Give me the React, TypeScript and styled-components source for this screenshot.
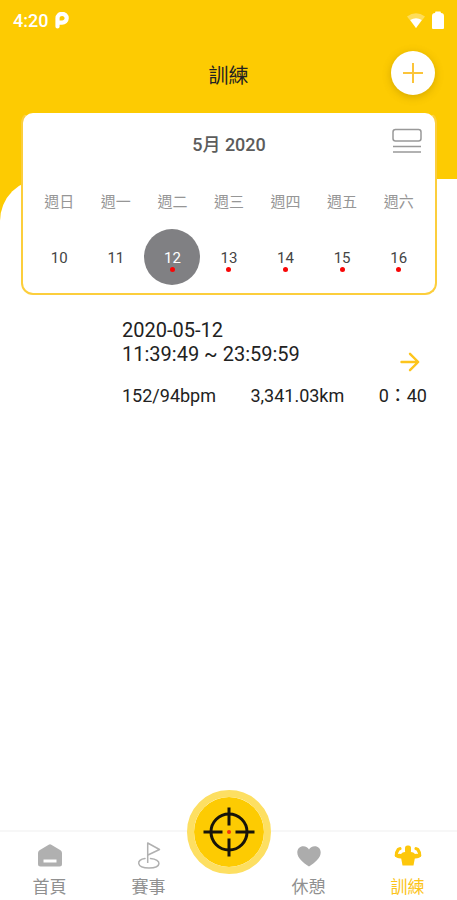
import React from "react";
import styled, { createGlobalStyle } from "styled-components";

const YELLOW = "#fdcb02";
const GREY = "#b0b0b0";

const GlobalStyle = createGlobalStyle`
  *, *::before, *::after { box-sizing: border-box; }
  body {
    margin: 0;
    background: #fff;
    font-family: Roboto, "Noto Sans CJK TC", sans-serif;
    color: #222;
  }
  button { font: inherit; color: inherit; border: 0; padding: 0; background: none; cursor: pointer; }
  a { text-decoration: none; color: inherit; }
  svg { display: block; }
`;

const Page = styled.div`
  min-height: 100vh;
  display: flex;
  flex-direction: column;
  background: ${YELLOW};
`;

const StatusBar = styled.div`
  height: 40px;
  padding: 0 13px;
  display: flex;
  align-items: center;
  justify-content: space-between;
  color: #fff;
  font-size: 18px;
  font-weight: 500;
`;

const StatusGroup = styled.div`
  display: flex;
  align-items: center;
  gap: 7px;
`;

const Header = styled.header`
  height: 139px;
  padding: 11px 22px 0;
  display: grid;
  grid-template-columns: 44px 1fr 44px;
  align-items: start;
`;

const Title = styled.h1`
  grid-column: 2;
  margin: 0;
  text-align: center;
  font-size: 20px;
  line-height: 50px;
  font-weight: 400;
`;

const AddButton = styled.button`
  width: 44px;
  height: 44px;
  border-radius: 50%;
  background: #fff;
  display: grid;
  place-items: center;
  box-shadow: 0 2px 8px rgba(120, 90, 0, 0.3);
`;

const Sheet = styled.main`
  flex: 1;
  display: flex;
  flex-direction: column;
  background: #fff;
  border-top-left-radius: 42px;
`;

const Card = styled.section`
  margin: -68px 20px 0 21px;
  padding: 0 8px 8px;
  background: #fff;
  border: 2px solid #fcce3c;
  border-top-color: ${YELLOW};
  border-radius: 12px;
`;

const MonthRow = styled.div`
  height: 60px;
  padding: 0 5px;
  display: grid;
  grid-template-columns: 30px 1fr 30px;
  align-items: center;
`;

const Month = styled.h2`
  grid-column: 2;
  margin: 0;
  text-align: center;
  font-size: 18px;
  font-weight: 500;
  color: #5c5c5c;
`;

const ToggleButton = styled.button`
  width: 30px;
  height: 26px;
  margin-bottom: 4px;
`;

const Calendar = styled.table`
  width: 100%;
  table-layout: fixed;
  border-collapse: collapse;
`;

const Weekday = styled.th`
  height: 56px;
  padding: 0 0 2px;
  font-size: 15px;
  font-weight: 400;
  color: #969696;
`;

const DayCell = styled.td`
  padding: 0;
`;

const Day = styled.button<{ $selected: boolean }>`
  display: flex;
  flex-direction: column;
  align-items: center;
  width: 56px;
  height: 56px;
  margin: 0 auto;
  padding-top: 20px;
  border-radius: 50%;
  font-size: 15px;
  line-height: 18px;
  background: ${(p) => (p.$selected ? "#808083" : "transparent")};
  color: ${(p) => (p.$selected ? "#fff" : "#444")};
`;

const Marker = styled.span`
  width: 5px;
  height: 5px;
  border-radius: 50%;
  background: #f80606;
`;

const Entry = styled.article`
  padding: 23px 30px 0 122px;
`;

const EntryTop = styled.div`
  display: flex;
  justify-content: space-between;
`;

const EntryTime = styled.div`
  display: flex;
  flex-direction: column;
  padding-bottom: 6px;
  font-size: 20px;
  line-height: 24px;
`;

const ArrowLink = styled.a`
  align-self: flex-end;
  padding-right: 7px;
`;

const Stats = styled.div`
  margin-top: 12px;
  display: flex;
  justify-content: space-between;
  font-size: 18px;
  line-height: 24px;
  white-space: nowrap;
`;

const Nav = styled.nav`
  position: sticky;
  bottom: 0;
  margin-top: auto;
  height: 70px;
  display: grid;
  grid-template-columns: 1fr 1fr 61px 1fr 1fr;
  background: #fff;
  border-top: 2px solid #f7f7f7;
`;

const NavLink = styled.a<{ $active?: boolean }>`
  display: flex;
  flex-direction: column;
  align-items: center;
  padding-top: 9px;
  gap: 4px;
  font-size: 17px;
  line-height: 24px;
  color: ${(p) => (p.$active ? "#fcc419" : "#909090")};
`;

const TargetButton = styled.button`
  justify-self: center;
  width: 84px;
  height: 84px;
  margin: -42px -12px 0;
  border: 7px solid #fddf62;
  border-radius: 50%;
  background: ${YELLOW};
  background-clip: padding-box;
  display: grid;
  place-items: center;
`;

const PieIcon = () => (
  <svg width="14" height="17" viewBox="0 0 14 17" aria-hidden="true">
    <path
      d="M2.5 14.5V6.2A4.6 4.4 0 1 1 7 10.6H5"
      fill="none"
      stroke="#fff"
      strokeWidth="4.2"
      strokeLinecap="round"
    />
  </svg>
);

const WifiIcon = () => (
  <svg width="18" height="15" viewBox="0 0 18 15" aria-hidden="true">
    <path d="M0 3.6Q9 -3 18 3.6L9 15Z" fill="#fff" opacity="0.35" />
    <path d="M3.2 7Q9 3.4 14.8 7L9 15Z" fill="#fff" />
  </svg>
);

const BatteryIcon = () => (
  <svg width="12" height="18" viewBox="0 0 12 18" aria-hidden="true">
    <path d="M3.500 .5h5L9 2Q12 2 12 5v12q0 1-1 1H1q-1 0-1-1V5Q0 2 3 2Z" fill="#fff" />
  </svg>
);

const PlusIcon = () => (
  <svg width="20" height="20" viewBox="0 0 20 20" aria-hidden="true">
    <path d="M10 0v20M0 10h20" stroke="#fbc43a" strokeWidth="2" />
  </svg>
);

const CollapseIcon = () => (
  <svg width="30" height="26" viewBox="0 0 30 26" fill="none" stroke="#999" aria-hidden="true">
    <rect x="1" y="1.500" width="28" height="11.500" rx="2.500" strokeWidth="1.500" />
    <path d="M1 18.500h28M1 24h28" strokeWidth="1.500" />
  </svg>
);

const ArrowIcon = () => (
  <svg width="20" height="20" viewBox="0 0 20 20" aria-hidden="true">
    <path
      d="M1.500 10H18M10 1.800L18.200 10L10 18.200"
      fill="none"
      stroke="#fdc51c"
      strokeWidth="2.400"
      strokeLinecap="round"
      strokeLinejoin="round"
    />
  </svg>
);

const HomeIcon = () => (
  <svg width="28" height="30" viewBox="0 0 28 30" aria-hidden="true">
    <path
      d="M12.700 3.700Q14 2.900 15.300 3.700L24.500 9.200Q26 10.200 26 12V23Q26 25.500 23.500 25.500H4.500Q2 25.500 2 23V12Q2 10.200 3.500 9.200ZM7.500 18.500V21.500H20.500V18.500Z"
      fill={GREY}
      fillRule="evenodd"
    />
  </svg>
);

const FlagIcon = () => (
  <svg width="28" height="30" viewBox="0 0 28 30" fill="none" stroke={GREY} aria-hidden="true">
    <path d="M12.700 22V2L24.500 8.500L13 14" strokeWidth="1.500" strokeLinejoin="round" />
    <path
      d="M10 17.500C1 18.500 1 27 14 27C27 27 27 18.500 15.500 17.500"
      strokeWidth="1.500"
      strokeLinecap="round"
    />
  </svg>
);

const HeartIcon = () => (
  <svg width="28" height="30" viewBox="0 0 28 30" aria-hidden="true">
    <path
      d="M14 25.500C8 21.500 2.300 17 2.300 11.500C2.300 7.500 5 5.200 8.200 5.200C11 5.200 13 6.800 14 8.500C15 6.800 17 5.200 19.800 5.200C23 5.200 25.700 7.500 25.700 11.500C25.700 17 20 21.500 14 25.500Z"
      fill="#acacac"
    />
  </svg>
);

const MuscleIcon = () => (
  <svg width="28" height="30" viewBox="0 0 28 30" aria-hidden="true">
    <rect x="11" y="4.500" width="6" height="8" rx="2.500" fill="#fdc70c" />
    <path
      d="M6 7.600L4.200 8.400Q2.200 11 2.300 14.500M22 7.600L23.800 8.400Q25.800 11 25.700 14.500"
      fill="none"
      stroke="#fdc70c"
      strokeWidth="3.200"
      strokeLinecap="round"
      strokeLinejoin="round"
    />
    <path
      d="M.7 14.500Q4 12 7 13Q8.500 10.800 11.500 11H16.500Q19.500 10.800 21 13Q24 12 27.300 14.500Q26 17.600 20.800 17.500L19.500 24.500H8.500L7.200 17.500Q2 17.600 .7 14.500Z"
      fill="#fdc70c"
    />
  </svg>
);

const CrosshairIcon = () => (
  <svg width="54" height="54" viewBox="0 0 54 54" fill="none" aria-hidden="true">
    <circle cx="27" cy="27" r="18" stroke="#17140a" strokeWidth="3" />
    <path
      d="M27 2.500V20.500M27 33.500V51.500M1.500 27H20.500M33.500 27H52.500"
      stroke="#17140a"
      strokeWidth="3"
    />
    <circle cx="27" cy="27" r="2" fill="#f5350b" />
  </svg>
);

const DAYS = [
  { name: "週日", date: 10, marked: false },
  { name: "週一", date: 11, marked: false },
  { name: "週二", date: 12, marked: true },
  { name: "週三", date: 13, marked: true },
  { name: "週四", date: 14, marked: true },
  { name: "週五", date: 15, marked: true },
  { name: "週六", date: 16, marked: true },
];

const SELECTED = 12;

export default function App() {
  return (
    <Page lang="zh-Hant">
      <GlobalStyle />
      <StatusBar>
        <StatusGroup>
          <span>4:20</span>
          <PieIcon />
        </StatusGroup>
        <StatusGroup>
          <WifiIcon />
          <BatteryIcon />
        </StatusGroup>
      </StatusBar>
      <Header>
        <Title>訓練</Title>
        <AddButton aria-label="新增">
          <PlusIcon />
        </AddButton>
      </Header>
      <Sheet>
        <Card>
          <MonthRow>
            <Month>5月 2020</Month>
            <ToggleButton aria-label="切換檢視">
              <CollapseIcon />
            </ToggleButton>
          </MonthRow>
          <Calendar>
            <thead>
              <tr>
                {DAYS.map((d) => (
                  <Weekday key={d.date} scope="col">
                    {d.name}
                  </Weekday>
                ))}
              </tr>
            </thead>
            <tbody>
              <tr>
                {DAYS.map((d) => (
                  <DayCell key={d.date}>
                    <Day $selected={d.date === SELECTED}>
                      {d.date}
                      {d.marked && <Marker />}
                    </Day>
                  </DayCell>
                ))}
              </tr>
            </tbody>
          </Calendar>
        </Card>
        <Entry>
          <EntryTop>
            <EntryTime>
              <span>2020-05-12</span>
              <span>11:39:49 ~ 23:59:59</span>
            </EntryTime>
            <ArrowLink href="#detail" aria-label="詳細">
              <ArrowIcon />
            </ArrowLink>
          </EntryTop>
          <Stats>
            <span>152/94bpm</span>
            <span>3,341.03km</span>
            <span>0：40</span>
          </Stats>
        </Entry>
        <Nav>
          <NavLink href="#home">
            <HomeIcon />
            首頁
          </NavLink>
          <NavLink href="#events">
            <FlagIcon />
            賽事
          </NavLink>
          <TargetButton aria-label="開始">
            <CrosshairIcon />
          </TargetButton>
          <NavLink href="#rest">
            <HeartIcon />
            休憩
          </NavLink>
          <NavLink href="#training" $active>
            <MuscleIcon />
            訓練
          </NavLink>
        </Nav>
      </Sheet>
    </Page>
  );
}
